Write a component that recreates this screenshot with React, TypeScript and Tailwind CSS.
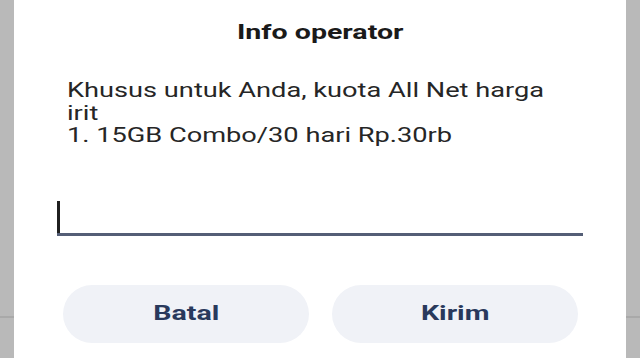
import React from "react";

function SideStrip() {
  return (
    <div className="relative h-full w-[14px] bg-[#b9b9b9]">
      <div className="absolute left-0 right-0 top-[316px] h-[2px] bg-[#a9a9a9]" />
    </div>
  );
}

// the source screenshot is stretched sideways, so glyphs get a horizontal scale
function Wide({ children, className = "" }: { children: React.ReactNode; className?: string }) {
  return <span className={`inline-block scale-x-[1.36] whitespace-nowrap ${className}`}>{children}</span>;
}

function PillButton({ label }: { label: string }) {
  return (
    <button className="flex h-[58px] w-[246px] items-center justify-center rounded-full bg-[#f0f2f7] pt-[1px] text-[21px] font-bold text-[#29395c]">
      <Wide>{label}</Wide>
    </button>
  );
}

export default function App() {
  return (
    <div
      className="flex h-[358px] w-[640px] overflow-hidden bg-white"
      style={{ fontFamily: "Roboto, 'Liberation Sans', sans-serif" }}
    >
      <SideStrip />
      <div className="flex flex-1 flex-col bg-white">
        <h2 className="mt-[20px] text-center text-[21px] font-bold leading-[25px] text-[#1a1a1a]">
          <Wide>Info operator</Wide>
        </h2>
        <div className="mt-[34px] pl-[53px] text-[20px] leading-[22.5px] text-[#262626]">
          <div><Wide className="origin-left">Khusus untuk Anda, kuota All Net harga</Wide></div>
          <div><Wide className="origin-left">irit</Wide></div>
          <div><Wide className="origin-left">1. 15GB Combo/30 hari Rp.30rb</Wide></div>
        </div>
        <div className="ml-[43px] mr-[43px] mt-[53px] flex h-[36px] items-end border-b-[3px] border-[#545e76]">
          <span className="h-[32px] w-[3px] bg-[#1f1f1f]" />
        </div>
        <div className="mt-[49px] flex gap-[23px] pl-[49px]">
          <PillButton label="Batal" />
          <PillButton label="Kirim" />
        </div>
      </div>
      <SideStrip />
    </div>
  );
}
